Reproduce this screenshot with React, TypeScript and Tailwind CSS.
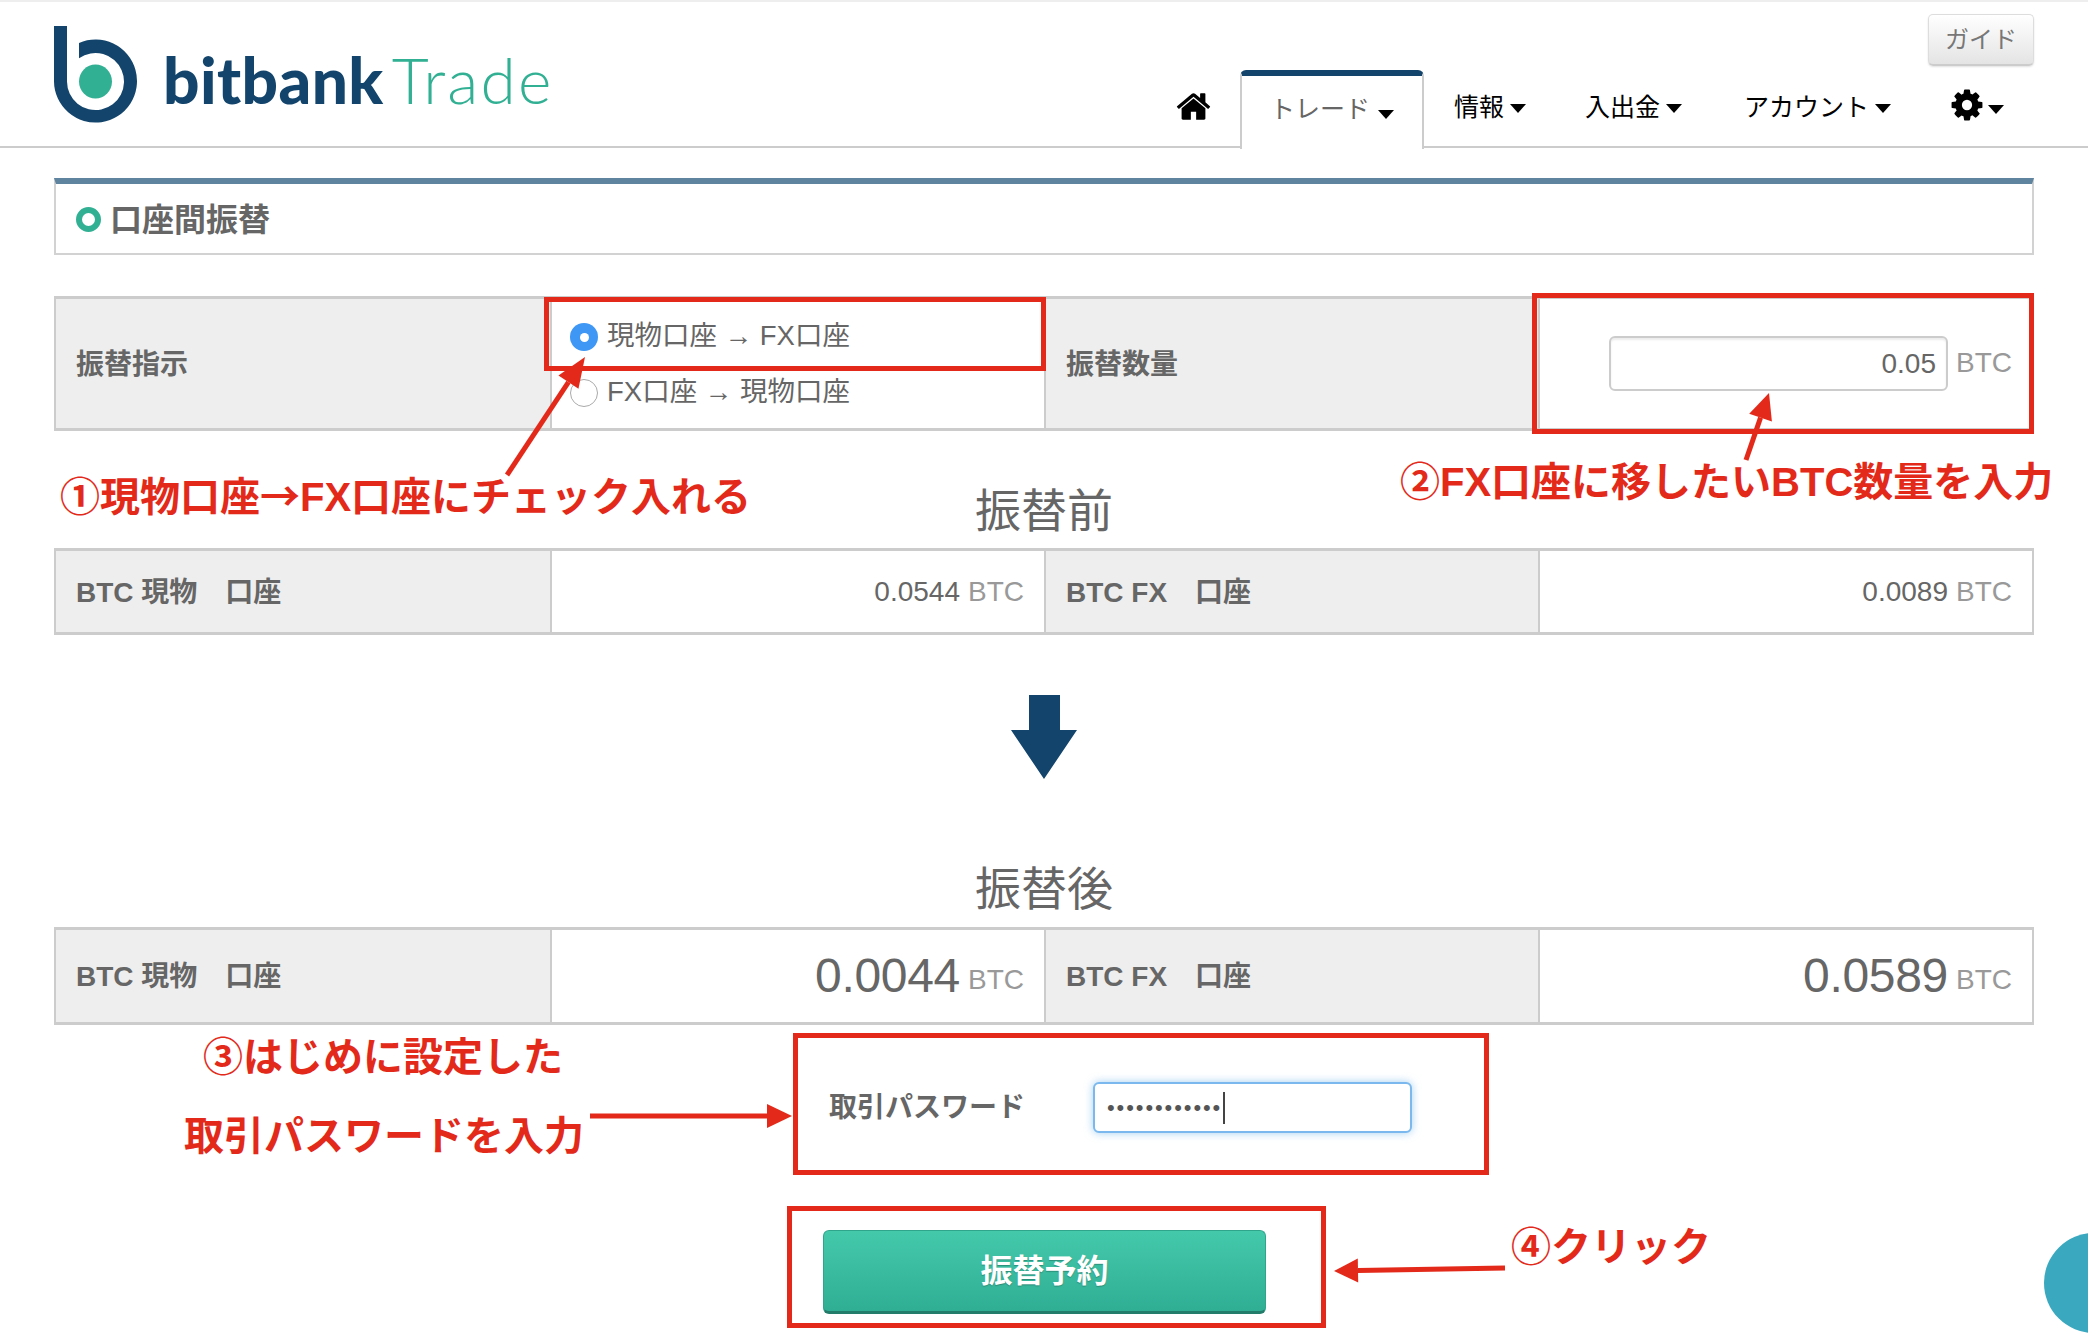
import React from "react";

const RED = "#e32a1a";

function Home() {
  return (
    <svg width="37" height="37" viewBox="0 0 1792 1792" fill="#000">
      <path d="M1472 992v480q0 26-19 45t-45 19h-384v-384h-256v384h-384q-26 0-45-19t-19-45v-480q0-1 .5-3t.5-3l575-474 575 474q1 2 1 6zm223-69l-62 74q-8 9-21 11h-3q-13 0-21-7l-692-577-692 577q-12 8-24 7-13-2-21-11l-62-74q-8-10-7-23.500t11-21.500l719-599q32-26 76-26t76 26l244 204v-195q0-14 9-23t23-9h192q14 0 23 9t9 23v408l219 182q10 8 11 21.500t-7 23.500z" />
    </svg>
  );
}

function Gear() {
  return (
    <svg width="36" height="36" viewBox="0 0 1792 1792" fill="#000">
      <path d="M1152 896q0-106-75-181t-181-75-181 75-75 181 75 181 181 75 181-75 75-181zm512-109v222q0 12-8 23t-20 13l-185 28q-19 54-39 91 35 50 107 138 10 12 10 25t-9 23q-27 37-99 108t-94 71q-12 0-26-9l-138-108q-44 23-91 38-16 136-29 186-7 28-36 28h-222q-14 0-24.500-8.500t-11.500-21.500l-28-184q-49-16-90-37l-141 107q-10 9-25 9-14 0-25-11-126-114-165-168-7-10-7-23 0-12 8-23 15-21 51-66.500t54-70.500q-27-50-41-99l-183-27q-13-2-21-12.500t-8-23.500v-222q0-12 8-23t19-13l186-28q14-46 39-92-40-57-107-138-10-12-10-24 0-10 9-23 26-36 98.500-107.500t94.500-71.500q13 0 26 10l138 107q44-23 91-38 16-136 29-186 7-28 36-28h222q14 0 24.500 8.500t11.500 21.500l28 184q49 16 90 37l142-107q9-9 24-9 13 0 25 10 129 119 165 170 7 8 7 22 0 12-8 23-15 21-51 66.500t-54 70.500q26 50 41 98l183 28q13 2 21 12.500t8 23.500z" />
    </svg>
  );
}

function Caret({ color = "#000" }: { color?: string }) {
  return (
    <svg width="16" height="9" viewBox="0 0 16 9" className="shrink-0">
      <path d="M0 0H16L8 9Z" fill={color} />
    </svg>
  );
}

function Logo() {
  return (
    <div className="flex items-start">
      <svg width="84" height="98" viewBox="54 26 84 98" className="mt-[24px] ml-[54px] shrink-0">
        <path d="M54 26H67V81.500A28.500 28.500 0 1 0 79 58.300V43A41.500 41.500 0 1 1 54 81.500Z" fill="#12446c" />
        <ellipse cx="95.500" cy="81.500" rx="16.500" ry="17" fill="#32b093" />
      </svg>
      <div className="ml-[25px] mt-[38px] flex items-baseline leading-[80px] text-[64px] [font-family:Lato,sans-serif]">
        <span className="font-black text-[#12446c] tracking-[0.4px]">bitbank</span>
        <span className="ml-[8px] font-light text-[#32b093] tracking-[2.2px]">Trade</span>
      </div>
    </div>
  );
}

function NavItem({ children, className }: { children: React.ReactNode; className: string }) {
  return (
    <div className={"flex items-center gap-[6px] text-[25px] text-black leading-[36px] " + className}>
      {children}
      <span className="mt-[2px]">
        <Caret />
      </span>
    </div>
  );
}

function Header() {
  return (
    <header className="relative h-[148px] border-t-2 border-b-2 border-t-[#eeeeee] border-b-[#cccccc] flex justify-between">
      <Logo />
      <div className="flex flex-col items-end">
        <button className="mt-[12px] mr-[54px] w-[106px] h-[52px] shrink-0 rounded-[5px] border border-[#dddddd] border-b-2 border-b-[#cccccc] bg-gradient-to-b from-[#ffffff] to-[#e4e4e4] text-[24px] text-[#777777] shadow-[0_1px_2px_rgba(0,0,0,0.12)]">
          ガイド
        </button>
        <nav className="flex items-start mt-[4px] h-[70px] shrink-0">
          <div className="mt-[18px] mr-[28px]">
            <Home />
          </div>
          <div className="relative w-[184px] h-[79px] bg-white border-x-2 border-x-[#cccccc] border-t-[6px] border-t-[#12446c] rounded-t-[6px] flex items-center pl-[28px] gap-[8px] text-[25px] text-[#666666] z-10 pb-[5px]">
            トレード
            <span className="mt-[8px]">
              <Caret />
            </span>
          </div>
          <NavItem className="ml-[30px] mt-[19px]">情報</NavItem>
          <NavItem className="ml-[59px] mt-[19px]">入出金</NavItem>
          <NavItem className="ml-[62px] mt-[19px]">アカウント</NavItem>
          <div className="ml-[58px] mt-[17px] mr-[84px] flex items-center gap-[3px]">
            <Gear />
            <span className="mt-[8px]">
              <Caret />
            </span>
          </div>
        </nav>
      </div>
    </header>
  );
}

function Label({ children, w }: { children: React.ReactNode; w: string }) {
  return (
    <div className={"flex items-center pl-[20px] pt-[2px] bg-[#eeeeee] border-r-2 border-r-[#cccccc] font-bold text-[28px] text-[#666666] " + w}>
      {children}
    </div>
  );
}

function Amount({ value, big }: { value: string; big?: boolean }) {
  return (
    <div className="flex-1 flex items-center justify-end pr-[20px] gap-[8px] text-[#666666] border-r-2 border-r-[#cccccc] last:border-r-0">
      <span className={big ? "text-[48px] tracking-[-0.3px]" : "text-[28px]"}>{value}</span>
      <span className={"text-[28px] text-[#999999] " + (big ? "mt-[8px]" : "")}>BTC</span>
    </div>
  );
}

function Row({ children, h }: { children: React.ReactNode; h: string }) {
  return <div className={"flex border-y-[3px] border-x-2 border-[#cccccc] " + h}>{children}</div>;
}

function Radio({ on, text }: { on?: boolean; text: string }) {
  return (
    <div className="flex items-center h-[56px] pl-[18px] text-[27.500px] text-[#666666]">
      {on ? (
        <span className="w-[28px] h-[28px] rounded-full bg-[#3e97f5] flex items-center justify-center shrink-0">
          <span className="w-[9px] h-[9px] rounded-full bg-white" />
        </span>
      ) : (
        <span className="w-[28px] h-[28px] rounded-full bg-white border border-[#aaaaaa] shrink-0" />
      )}
      <span className="ml-[9px] -mt-[3px]">{text}</span>
    </div>
  );
}

function Heading({ children, h }: { children: React.ReactNode; h: string }) {
  return <div className={"flex items-end justify-center text-[46px] leading-[60px] text-[#666666] " + h}>{children}</div>;
}

function Arrow({ x1, y1, x2, y2, head = 26, wide = 26, t = 5 }: { x1: number; y1: number; x2: number; y2: number; head?: number; wide?: number; t?: number }) {
  const dx = x2 - x1;
  const dy = y2 - y1;
  const l = Math.hypot(dx, dy);
  const ux = dx / l;
  const uy = dy / l;
  const bx = x2 - ux * head;
  const by = y2 - uy * head;
  const px = -uy;
  const py = ux;
  return (
    <>
      <line x1={x1} y1={y1} x2={bx} y2={by} stroke={RED} strokeWidth={t} />
      <polygon
        points={`${x2},${y2} ${bx + (px * wide) / 2},${by + (py * wide) / 2} ${bx - (px * wide) / 2},${by - (py * wide) / 2}`}
        fill={RED}
      />
    </>
  );
}

function Box({ className }: { className: string }) {
  return <div className={"absolute border-[5px] border-[#e32a1a] pointer-events-none " + className} />;
}

function Note({ className, children }: { className: string; children: React.ReactNode }) {
  return <div className={"absolute whitespace-nowrap font-bold text-[40px] leading-[50px] text-[#e32a1a] " + className}>{children}</div>;
}

export default function App() {
  return (
    <div className="relative w-[2088px] h-[1340px] overflow-hidden bg-white [font-family:'Liberation_Sans','Noto_Sans_CJK_JP',sans-serif]">
      <Header />
      <main className="mx-[54px]">
        <section className="mt-[30px] h-[77px] border-x-2 border-b-2 border-[#d2d2d2] border-t-[6px] border-t-[#5f84a0] flex items-center pl-[20px] pt-[2px]">
          <span className="w-[25px] h-[25px] rounded-full border-[6px] border-[#32b093] shrink-0" />
          <span className="ml-[9px] font-bold text-[32px] text-[#666666]">口座間振替</span>
        </section>

        <div className="mt-[41px]">
          <Row h="h-[135px]">
            <Label w="w-[496px]">振替指示</Label>
            <div className="w-[494px] flex flex-col justify-center border-r-2 border-r-[#cccccc] pt-[3px]">
              <Radio on text="現物口座 → FX口座" />
              <Radio text="FX口座 → 現物口座" />
            </div>
            <Label w="w-[494px]">振替数量</Label>
            <div className="flex-1 flex items-center justify-end pr-[20px] gap-[8px]">
              <div className="w-[339px] h-[55px] rounded-[6px] border-2 border-[#cccccc] shadow-[inset_0_2px_2px_rgba(0,0,0,0.08)] flex items-center justify-end pr-[10px] text-[28px] text-[#666666]">
                0.05
              </div>
              <span className="text-[28px] text-[#999999] -mt-[2px]">BTC</span>
            </div>
          </Row>
        </div>

        <Heading h="h-[117px] pb-[7px]">振替前</Heading>
        <Row h="h-[87px]">
          <Label w="w-[496px]">BTC 現物　口座</Label>
          <Amount value="0.0544" />
          <Label w="w-[494px]">BTC FX　口座</Label>
          <Amount value="0.0089" />
        </Row>

        <div className="flex justify-center pt-[60px]">
          <svg width="66" height="84" viewBox="0 0 66 84">
            <path d="M18 0H49V35H66L33 84L0 35H18Z" fill="#12446c" />
          </svg>
        </div>

        <Heading h="h-[148px] pb-[8px]">振替後</Heading>
        <Row h="h-[98px]">
          <Label w="w-[496px]">BTC 現物　口座</Label>
          <Amount value="0.0044" big />
          <Label w="w-[494px]">BTC FX　口座</Label>
          <Amount value="0.0589" big />
        </Row>

        <div className="mt-[57px] ml-[775px] flex items-center h-[51px]">
          <span className="w-[264px] font-bold text-[28px] text-[#666666]">取引パスワード</span>
          <div className="w-[319px] h-[51px] rounded-[6px] border-2 border-[#7ab8ee] shadow-[0_0_8px_rgba(102,175,233,0.6)] flex items-center pl-[12px] bg-white">
            <span className="text-[22px] leading-none text-[#555555] tracking-[1.900px]">••••••••••••</span>
            <span className="ml-[1px] w-[2px] h-[32px] bg-[#444444]" />
          </div>
        </div>

        <button className="block mt-[97px] ml-[769px] w-[443px] h-[84px] rounded-[6px] border border-[#2fa58c] border-b-[3px] border-b-[#237c6a] bg-gradient-to-b from-[#44c9ab] to-[#2fae94] text-white font-bold text-[32px] [text-shadow:0_1px_1px_rgba(0,0,0,0.25)]">
          振替予約
        </button>
      </main>

      <div className="absolute left-[2044px] top-[1233px] w-[100px] h-[100px] rounded-full bg-[#3aa8bf]" />

      <Box className="left-[544px] top-[297px] w-[502px] h-[74px]" />
      <Box className="left-[1532px] top-[293px] w-[502px] h-[141px]" />
      <Box className="left-[793px] top-[1033px] w-[696px] h-[142px]" />
      <Box className="left-[787px] top-[1206px] w-[539px] h-[122px]" />

      <svg className="absolute left-0 top-0 pointer-events-none" width="2088" height="1340">
        <Arrow x1={507} y1={475} x2={585} y2={357} head={30} wide={24} />
        <Arrow x1={1746} y1={460} x2={1769} y2={393} head={26} wide={24} />
        <Arrow x1={590} y1={1116} x2={792} y2={1116} head={25} wide={24} />
        <Arrow x1={1505} y1={1268} x2={1334} y2={1271} head={24} wide={24} />
      </svg>

      <Note className="left-[60px] top-[469px]">
        ①現物口座<span className="[font-family:'Noto_Sans_CJK_JP',sans-serif]">→</span>FX口座にチェック入れる
      </Note>
      <Note className="left-[1400px] top-[457px]">②FX口座に移したいBTC数量を入力</Note>
      <Note className="left-[203px] top-[1032px]">③はじめに設定した</Note>
      <Note className="left-[184px] top-[1111px]">取引パスワードを入力</Note>
      <Note className="left-[1511px] top-[1222px]">④クリック</Note>
    </div>
  );
}
